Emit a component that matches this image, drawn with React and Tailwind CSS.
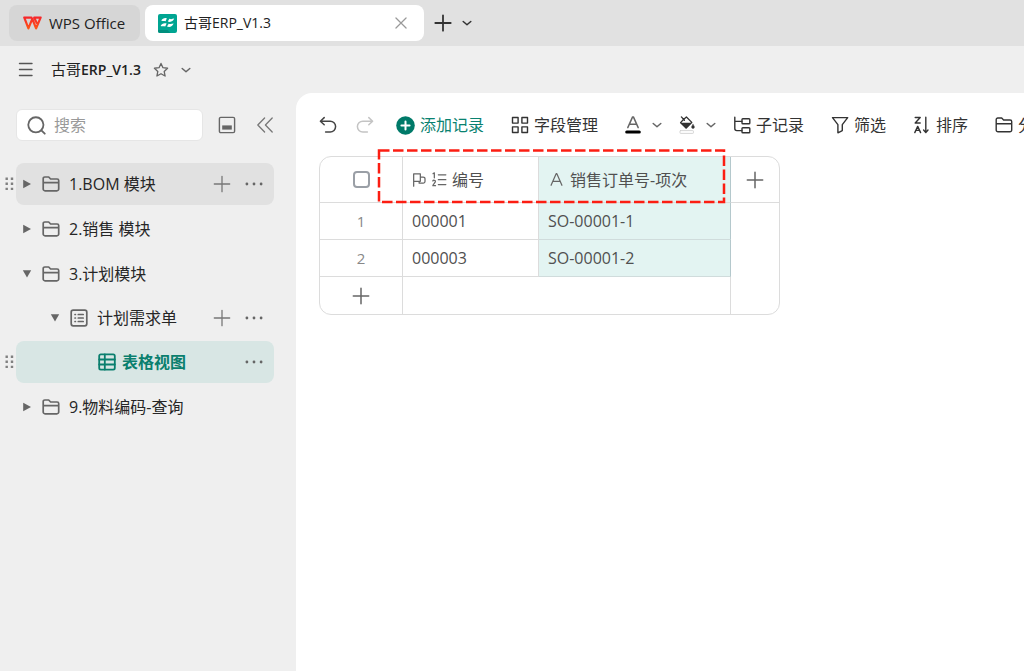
import { clsx } from 'clsx'

function Icon({ size = 18, width = 1.5, className, children }) {
  return (
    <svg
      width={size}
      height={size}
      viewBox="0 0 18 18"
      fill="none"
      stroke="currentColor"
      strokeWidth={width}
      strokeLinecap="round"
      strokeLinejoin="round"
      className={clsx('shrink-0', className)}
      aria-hidden="true"
    >
      {children}
    </svg>
  )
}

const FolderIcon = ({ width = 1.7 }) => (
  <Icon width={width}>
    <path d="M1.2 14v-10.400a1.600 1.600 0 0 1 1.600-1.600h3.900l1.900 2h6.500a1.600 1.600 0 0 1 1.600 1.600v8.400a1.800 1.800 0 0 1-1.800 1.800H3a1.800 1.800 0 0 1-1.800-1.800zM1.200 7.700h15.500" />
  </Icon>
)

const SheetIcon = () => (
  <Icon width={1.7}>
    <rect x="1.2" y="1.2" width="15.6" height="15.6" rx="2" />
    <path d="M5 5.500h.4M5 9h.4M5 12.500h.4M8.300 5.500h4.900M8.300 9h4.900M8.300 12.500h4.900" />
  </Icon>
)

const GridViewIcon = () => (
  <Icon width={1.8}>
    <rect x="1.2" y="1.4" width="15.6" height="15.2" rx="1.6" />
    <path d="M6.800 1.400v15.200M1.200 6.500h15.600M1.200 11.500h15.600" />
  </Icon>
)

const PlusIcon = ({ width = 1.5 }) => (
  <Icon width={width}>
    <path d="M9 1.300v15.400M1.300 9h15.400" />
  </Icon>
)

const MoreIcon = () => (
  <Icon>
    <g fill="currentColor" stroke="none">
      <circle cx="1.9" cy="9" r="1.4" />
      <circle cx="9" cy="9" r="1.4" />
      <circle cx="16.1" cy="9" r="1.4" />
    </g>
  </Icon>
)

const ChevronIcon = () => (
  <svg width="10" height="10" viewBox="0 0 10 10" fill="none" stroke="currentColor" strokeWidth="1.5" strokeLinecap="round" strokeLinejoin="round" className="shrink-0" aria-hidden="true">
    <path d="m1.200 3.500 3.800 3.300 3.800-3.300" />
  </svg>
)

const ArrowIcon = ({ open }) => (
  <svg width="10" height="10" viewBox="0 0 10 10" fill="currentColor" className="shrink-0" aria-hidden="true">
    <path d={open ? 'M.8 1.200h8.400L5 8.600z' : 'M1.200.8v8.400L9 5z'} />
  </svg>
)

const WpsLogo = () => (
  <svg width="19" height="14" viewBox="0 0 19 14" fill="none" className="shrink-0" aria-hidden="true">
    <defs>
      <linearGradient id="wps" gradientUnits="userSpaceOnUse" x1="0" y1="0" x2="0" y2="14">
        <stop offset="0" stopColor="#f5222d" />
        <stop offset="1" stopColor="#ff5a14" />
      </linearGradient>
    </defs>
    <path d="M1.300 1.600h7.200M1.300 1.600 5.400 12.400 9.300 2.800l3.800 9.600L17.600 1.600h-6.400l2.400 5.200" stroke="url(#wps)" strokeWidth="2.200" strokeLinejoin="round" strokeLinecap="round" />
  </svg>
)

const BaseLogo = () => (
  <svg width="19" height="19" viewBox="0 0 19 19" className="shrink-0" aria-hidden="true">
    <rect width="19" height="19" rx="2" fill="#00a592" />
    <path d="M0 16h9.500l3 3H2a2 2 0 0 1-2-2z" fill="#008f7e" />
    <path
      d="M3.200 6.800c1.200-2.200 2.800-3 5.600-2.600L7.600 7.200C5.800 6.600 4.800 7.200 3.200 6.800zM9.800 7.600l1.600-2.800c1.600.7 3 .2 4.800-.2-1.200 2.700-3.200 3.900-6.400 3zM2.600 12c1.200-2.300 3-3.200 6-2.600l-1.400 3c-1.800-.6-3 .1-4.600-.4zM9 12.600l1.700-2.900c1.700.7 3.100.2 4.900-.2-1.200 2.800-3.300 4-6.600 3.100z"
      fill="#fff"
    />
  </svg>
)

function TabBar() {
  return (
    <header className="flex h-[46px] items-center gap-[5px] bg-[#e1e1e1] pl-[9px]">
      <button className="flex h-9 w-[131px] items-center gap-[7px] rounded-lg bg-[#d6d6d6] pl-3.5 text-[15px]">
        <WpsLogo />
        WPS Office
      </button>
      <div className="flex h-9 w-[279px] items-center gap-[7px] rounded-lg bg-white pr-4 pl-[13px] text-sm">
        <BaseLogo />
        <span className="flex-1">古哥ERP_V1.3</span>
        <button aria-label="Close tab" className="text-[#999]">
          <Icon size={14} width={1.6}>
            <path d="m2.500 2.500 13 13M15.500 2.500l-13 13" />
          </Icon>
        </button>
      </div>
      <button aria-label="New tab" className="ml-[5px] text-[#333]"><PlusIcon width={1.8} /></button>
      <button aria-label="Tab list" className="ml-[5px] text-[#333]"><ChevronIcon /></button>
    </header>
  )
}

function TitleBar() {
  return (
    <div className="flex h-[47px] shrink-0 items-center pl-[17px] text-[15px]">
      <button aria-label="Menu" className="text-[#555]">
        <Icon width={1.4}>
          <path d="M2.500 2.500h12.500M2.500 8.500h12.500M2.500 14.500h12.500" />
        </Icon>
      </button>
      <h1 className="ml-4">古哥<span className="text-sm font-semibold">ERP_V1.3</span></h1>
      <button aria-label="Favorite" className="ml-3 text-[#666]">
        <Icon size={16} width={1.5}>
          <path d="m9 1.600 2.200 4.800 5.200.6-3.800 3.600 1 5.200L9 13.200l-4.600 2.600 1-5.200L1.600 7l5.200-.6z" />
        </Icon>
      </button>
      <button aria-label="More" className="ml-3 text-[#666]"><ChevronIcon /></button>
    </div>
  )
}

function TreeRow({ icon, label, open, level = 0, add, more, hover, active }) {
  return (
    <div className="flex items-center">
      <span className="flex w-4 shrink-0 justify-center pl-0.5">
        {(hover || active) && (
          <svg width="9" height="14" viewBox="0 0 9 14" fill="#808080" aria-hidden="true">
            <path d="M.5.5h2.400v2.400H.5zM5.800.5h2.400v2.400H5.800zM.5 5.600h2.400V8H.5zM5.800 5.600h2.400V8H5.800zM.5 10.700h2.400v2.400H.5zM5.800 10.700h2.400v2.400H5.800z" />
          </svg>
        )}
      </span>
      <div
        className={clsx(
          'flex h-[42px] flex-1 items-center rounded-lg pr-[11px] text-[#666]',
          level === 0 && 'pl-1.5',
          level === 1 && 'pl-[34px]',
          level === 2 && 'pl-[82px]',
          hover && 'bg-[#e1e1e1]',
          active && 'bg-[#d8e6e4]',
        )}
      >
        {!active && (
          <button aria-label="Toggle" className="mr-2.5"><ArrowIcon open={open} /></button>
        )}
        <a href="#" className={clsx('flex flex-1 items-center', active ? 'gap-1.5 text-[#0a7f6e]' : 'gap-[9px]')}>
          {icon}
          <span className={active ? 'font-bold' : 'text-[#262626]'}>{label}</span>
        </a>
        {add && <button aria-label="Add" className="mr-3.5 text-[#777]"><PlusIcon width={1.3} /></button>}
        {more && <button aria-label="More"><MoreIcon /></button>}
      </div>
    </div>
  )
}

function Sidebar() {
  return (
    <aside className="w-[296px] shrink-0 pr-[22px]">
      <div className="flex items-center pt-4 pl-4">
        <label className="flex h-8 w-[189px] items-center gap-2 rounded-md border border-[#e6e6e6] bg-white pl-2.5">
          <Icon size={19} width={1.7} className="text-[#666]">
            <circle cx="8.4" cy="8.4" r="7.2" />
            <path d="m13.600 13.600 3.200 3.200" />
          </Icon>
          <input aria-label="搜索" placeholder="搜索" className="w-full min-w-0 bg-transparent outline-none placeholder:text-[#999]" />
        </label>
        <button aria-label="Panel" className="ml-[15px] text-[#666]">
          <Icon width={1.4}>
            <rect x="1.4" y="1.4" width="15.2" height="15.2" rx="1.4" />
            <path d="M4.200 9.400h9.600v4.200H4.200z" fill="currentColor" stroke="none" />
          </Icon>
        </button>
        <button aria-label="Collapse sidebar" className="ml-5 text-[#777]">
          <Icon width={1.3}>
            <path d="M8.600 2 1.800 9l6.800 7M16.200 2 9.400 9l6.800 7" />
          </Icon>
        </button>
      </div>
      <ul className="mt-[22px] flex flex-col gap-[3px]">
        <li><TreeRow icon={<FolderIcon />} label="1.BOM 模块" add more hover /></li>
        <li><TreeRow icon={<FolderIcon />} label="2.销售 模块" /></li>
        <li>
          <TreeRow icon={<FolderIcon />} label="3.计划模块" open />
          <ul className="mt-0.5 flex flex-col gap-0.5">
            <li><TreeRow icon={<SheetIcon />} label="计划需求单" level={1} open add more /></li>
            <li><TreeRow icon={<GridViewIcon />} label="表格视图" level={2} more active /></li>
          </ul>
        </li>
        <li><TreeRow icon={<FolderIcon />} label="9.物料编码-查询" /></li>
      </ul>
    </aside>
  )
}

function ToolButton({ icon, label }) {
  return (
    <button className="flex shrink-0 items-center gap-[5px]">
      {icon}
      <span>{label}</span>
    </button>
  )
}

function Toolbar() {
  return (
    <div className="flex items-center gap-[27px] overflow-hidden pl-[23px] whitespace-nowrap text-[#333]">
      <div className="flex shrink-0 items-center">
        <button aria-label="Undo" className="text-[#444]">
          <Icon width={1.5}>
            <path d="M5.200 1.600 1.400 5.200l3.800 3.600M1.600 5.200h9.600a5.400 5.400 0 0 1 0 10.800H6.600" />
          </Icon>
        </button>
        <button aria-label="Redo" className="ml-[19px] text-[#c4c4c4]">
          <Icon width={1.5}>
            <path d="m12.800 1.600 3.800 3.600-3.800 3.600M16.400 5.200H6.800a5.400 5.400 0 0 0 0 10.800h4.600" />
          </Icon>
        </button>
        <button className="ml-[22px] flex items-center gap-[5px] text-[#0a8270]">
          <svg width="19" height="19" viewBox="0 0 19 19" className="shrink-0" aria-hidden="true">
            <circle cx="9.5" cy="9.5" r="9.3" fill="#007a69" />
            <path d="M9.500 5.400v8.200M5.400 9.500h8.200" stroke="#fff" strokeWidth="2" strokeLinecap="round" />
          </svg>
          添加记录
        </button>
      </div>
      <ToolButton
        label="字段管理"
        icon={
          <Icon width={1.4}>
            <path d="M1.500 1.500h5.600v5.600H1.500zM10.900 1.500h5.600v5.600h-5.600zM1.500 10.900h5.600v5.600H1.500zM10.900 10.900h5.600v5.600h-5.600z" />
          </Icon>
        }
      />
      <div className="flex shrink-0 items-center gap-[17px]">
        <button aria-label="Text color" className="flex items-center gap-[9px] text-[#666]">
          <Icon>
            <path d="M2.800 11.600 7.600.9h.8l4.800 10.700M4.500 8.200h7" />
            <path d="M1.700 15.900h12.600" stroke="#000" strokeWidth="3" />
          </Icon>
          <ChevronIcon />
        </button>
        <button aria-label="Fill color" className="flex items-center gap-[9px] text-[#666]">
          <Icon width={1.3} className="text-[#333]">
            <path d="M2.400.9 5.400 4.200M4.200 3.800 7.400 1l5.400 5.400L7.200 12 1.600 6.600z" />
            <path d="M1.800 7h10.600l-5.200 5zM14 8.400c1 1.400 1.400 2 1.400 2.700a1.400 1.400 0 0 1-2.800 0c0-.7.4-1.300 1.400-2.700z" fill="currentColor" strokeWidth=".5" />
            <rect x="1" y="14.6" width="13.4" height="2.8" rx=".6" stroke="#ccc" strokeWidth=".8" />
          </Icon>
          <ChevronIcon />
        </button>
        <ToolButton
          label="子记录"
          icon={
            <Icon width={1.4}>
              <path d="M1.800 1.200v11.400a2 2 0 0 0 2 2h5M1.800 5.400h7" />
              <rect x="9" y="2.8" width="7.8" height="5" rx=".8" />
              <rect x="9" y="11.8" width="7.8" height="5" rx=".8" />
            </Icon>
          }
        />
      </div>
      <ToolButton
        label="筛选"
        icon={
          <Icon width={1.4}>
            <path d="M1.500 1.600h15.200l-5.400 7v6l-4.400 2.200V8.600z" />
          </Icon>
        }
      />
      <ToolButton
        label="排序"
        icon={
          <Icon width={1.4}>
            <path d="M2.200 1.500h5L2.200 7h5M1.800 16.600l2.900-6.200 2.900 6.200M3 14.400h3.400M12.800 1.200v15.400M10.600 14l2.200 2.600 2.200-2.600" />
          </Icon>
        }
      />
      <ToolButton label="分组" icon={<FolderIcon width={1.4} />} />
    </div>
  )
}

const records = [
  { no: '000001', order: 'SO-00001-1' },
  { no: '000003', order: 'SO-00001-2' },
]

function DataTable() {
  return (
    <div className="relative w-fit rounded-xl border border-[#dcdcdc]">
      <table className="table-fixed border-separate border-spacing-0 text-left text-[#505050]">
        <colgroup>
          <col className="w-[83px]" />
          <col className="w-[136px]" />
          <col className="w-48" />
          <col className="w-12" />
        </colgroup>
        <thead>
          <tr className="h-[46px]">
            <th className="border-r border-b border-[#dcdcdc] p-0">
              <input
                type="checkbox"
                aria-label="Select all"
                className="mx-auto block size-[17px] appearance-none rounded-sm border-2 border-[#9a9fa6] bg-white"
              />
            </th>
            <th className="border-r border-b border-[#dcdcdc] p-0 pl-[9px] font-normal">
              <span className="flex items-center gap-[5px]">
                <Icon size={15} width={1.5} className="text-[#666]">
                  <path d="M2 17V2.200h8v9H2M10 6h3.400a2.200 2.200 0 0 1 2.200 2.200v3a2.200 2.200 0 0 1-2.200 2.200H8.600v-2" />
                </Icon>
                <Icon size={15} width={1.5} className="text-[#666]">
                  <path d="M7.600 3.400h9M7.600 9.200h9M7.600 15h9M1.200 2 2.800 1v6M1 10.800c.4-1.400 3.400-1.200 3 .8C3.800 13 1 15 1 16.400h3.200" />
                </Icon>
                编号
              </span>
            </th>
            <th className="border-r border-b border-[#dcdcdc] border-r-[#b4c8cc] bg-[#e3f4f2] p-0 pl-[11px] font-normal">
              <span className="flex items-center gap-[7px]">
                <Icon size={13} width={1.7} className="text-[#666]">
                  <path d="M1.500 17 8.500 1h1l7 16M4.300 11.500h9.400" />
                </Icon>
                销售订单号-项次
              </span>
            </th>
            <th className="border-b border-[#dcdcdc] p-0">
              <button aria-label="Add field" className="mx-auto block text-[#666]"><PlusIcon /></button>
            </th>
          </tr>
        </thead>
        <tbody>
          {records.map((r, i) => (
            <tr key={r.no} className="h-[37px]">
              <td className="border-r border-b border-[#dcdcdc] p-0 text-center text-[15px] text-[#888]">{i + 1}</td>
              <td className="border-r border-b border-[#dcdcdc] p-0 pl-[9px]">{r.no}</td>
              <td className="border-r border-b border-[#d0dcdc] border-r-[#b4c8cc] bg-[#e3f4f2] p-0 pl-[9px]">{r.order}</td>
              <td className="p-0" />
            </tr>
          ))}
          <tr className="h-[37px]">
            <td className="border-r border-[#dcdcdc] p-0">
              <button aria-label="Add record" className="mx-auto block text-[#666]"><PlusIcon /></button>
            </td>
            <td colSpan={2} className="border-r border-[#dcdcdc] p-0" />
            <td className="p-0" />
          </tr>
        </tbody>
      </table>
      {/* dashed marker around the field headers */}
      <svg width="349" height="56" viewBox="0 0 349 56" fill="none" className="pointer-events-none absolute -top-2 left-[57px]" aria-hidden="true">
        <path d="M2 1.500h345v51.500H2z" stroke="#fc1d12" strokeWidth="2.500" strokeDasharray="10.500 3.500" />
      </svg>
    </div>
  )
}

export default function App() {
  return (
    <div className="flex h-screen flex-col overflow-hidden bg-[#efefef] font-['Open_Sans','Noto_Sans_CJK_SC',sans-serif] text-base text-[#222]">
      <TabBar />
      <TitleBar />
      <div className="flex min-h-0 flex-1">
        <Sidebar />
        <main className="min-w-0 flex-1 rounded-tl-2xl bg-white pt-5">
          <Toolbar />
          <div className="mt-[19px] pl-[23px]">
            <DataTable />
          </div>
        </main>
      </div>
    </div>
  )
}
